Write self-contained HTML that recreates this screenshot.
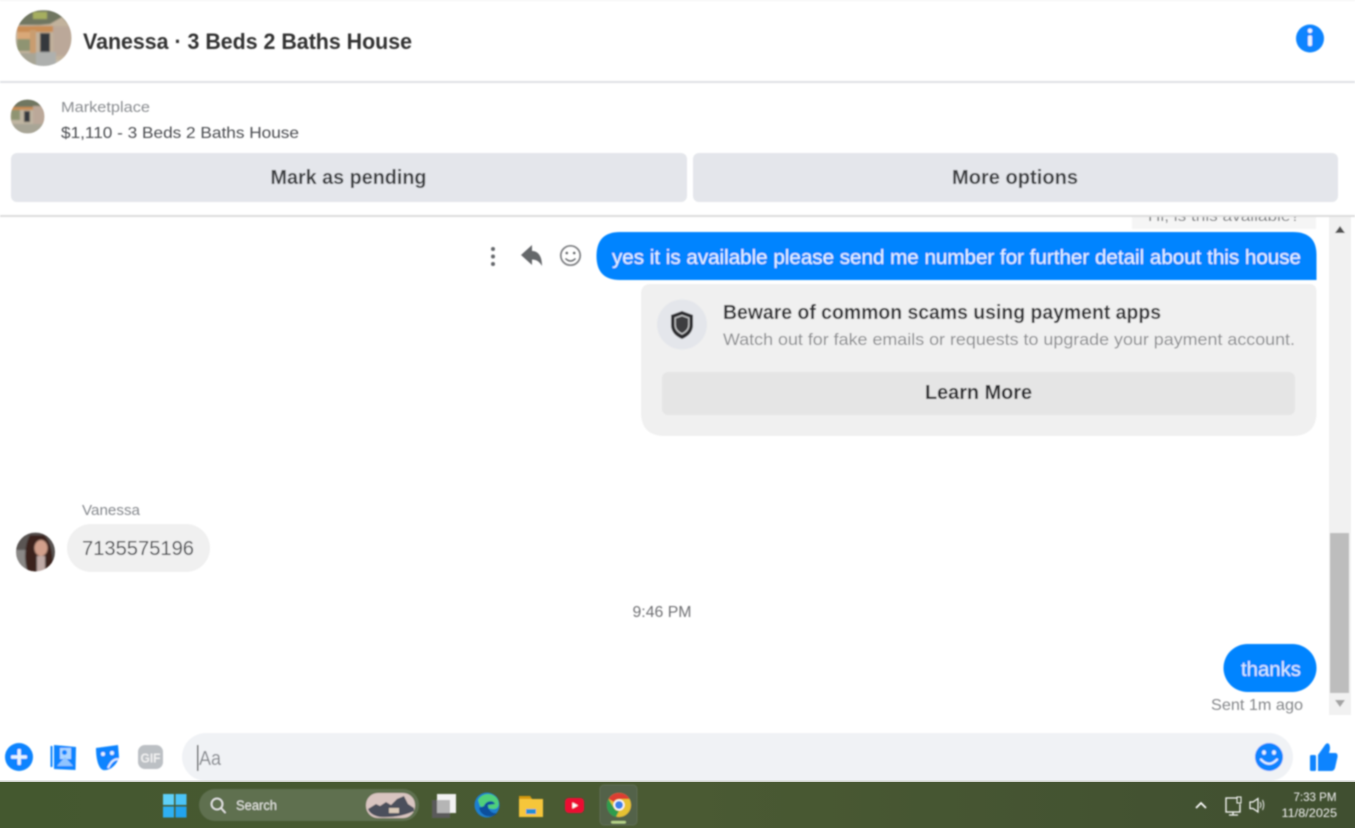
<!DOCTYPE html>
<html><head><meta charset="utf-8"><style>
html,body{margin:0;padding:0;width:1355px;height:828px;overflow:hidden;background:#fff}
svg{display:block}
text{font-family:"Liberation Sans",sans-serif}
</style></head><body>
<svg width="1355" height="828" viewBox="0 0 1355 828" xmlns="http://www.w3.org/2000/svg">
<defs>
<filter id="b" x="-5%" y="-20%" width="110%" height="140%"><feGaussianBlur stdDeviation="0.7"/></filter>
<filter id="b2" x="-20%" y="-20%" width="140%" height="140%"><feGaussianBlur stdDeviation="0.9"/></filter>
<clipPath id="c1"><circle cx="43.500" cy="38" r="28"/></clipPath>
<clipPath id="c2"><circle cx="27.500" cy="116.500" r="17"/></clipPath>
<clipPath id="c3"><circle cx="35.500" cy="552" r="19.500"/></clipPath>
<linearGradient id="tb" x1="0" x2="1" y1="0" y2="0"><stop offset="0" stop-color="#44582f"/><stop offset=".5" stop-color="#4a5a33"/><stop offset="1" stop-color="#404f30"/></linearGradient>
</defs>
<rect width="1355" height="828" fill="#fff"/>
<g filter="url(#b)">
<!-- header -->
<rect y="81" width="1355" height="2" fill="#dfe1e5"/>
<g clip-path="url(#c1)" filter="url(#b2)">
<rect x="15" y="10" width="58" height="56" fill="#c6bdac"/>
<rect x="15" y="10" width="58" height="15" fill="#6f7660"/>
<rect x="33" y="12" width="14" height="7" fill="#a6ae5e"/>
<polygon points="17,27 50,24 62,17 72,28 72,60 17,60" fill="#c2b29c"/>
<rect x="17" y="26" width="38" height="6" fill="#c98d55"/>
<rect x="17" y="32" width="13" height="7" fill="#d9a878"/>
<rect x="17" y="39" width="13" height="12" fill="#8f9472"/>
<rect x="30" y="30" width="6" height="24" fill="#c99d70"/>
<rect x="40" y="33" width="10" height="19" fill="#34383c"/>
<rect x="53" y="26" width="18" height="30" fill="#bba899"/>
<rect x="36" y="52" width="20" height="15" fill="#aeb0ae"/>
<rect x="15" y="53" width="21" height="14" fill="#a8a596"/>
</g>
<text x="83" y="49" font-size="22.500" font-weight="700" fill="#333" textLength="329" lengthAdjust="spacingAndGlyphs">Vanessa · 3 Beds 2 Baths House</text>
<circle cx="1310" cy="38.500" r="14" fill="#0a84ff"/>
<rect x="1308" y="35.500" width="4" height="10.500" rx="1.200" fill="#e9f3ff"/>
<circle cx="1310" cy="30.800" r="2.300" fill="#e9f3ff"/>
<!-- marketplace -->
<g clip-path="url(#c2)" filter="url(#b2)">
<rect x="10" y="99" width="35" height="35" fill="#c0b5a2"/>
<rect x="10" y="99" width="35" height="8" fill="#6f7660"/>
<rect x="11" y="107" width="22" height="3" fill="#c98d55"/>
<rect x="11" y="110" width="9" height="10" fill="#8f9472"/>
<rect x="24" y="111" width="6" height="11" fill="#34383c"/>
<rect x="33" y="106" width="12" height="18" fill="#bba899"/>
<rect x="10" y="124" width="35" height="10" fill="#a8a596"/>
</g>
<text x="61" y="112" font-size="15" fill="#8a8d91" textLength="89" lengthAdjust="spacingAndGlyphs">Marketplace</text>
<text x="61" y="138" font-size="16" fill="#4a4c50" textLength="238" lengthAdjust="spacingAndGlyphs">$1,110 - 3 Beds 2 Baths House</text>
<rect x="11" y="153" width="676" height="49" rx="6" fill="#e4e6eb"/>
<rect x="693" y="153" width="645" height="49" rx="6" fill="#e4e6eb"/>
<text x="270.500" y="184" font-size="20" font-weight="700" fill="#3b3c3f" textLength="156" lengthAdjust="spacingAndGlyphs">Mark as pending</text>
<text x="952" y="184" font-size="20" font-weight="700" fill="#3b3c3f" textLength="126" lengthAdjust="spacingAndGlyphs">More options</text>
<!-- previous message cut-off -->
<rect x="1132" y="217" width="184" height="12" fill="#f5f5f5"/>
<text x="1148" y="221" font-size="16" fill="#77797c" textLength="152" lengthAdjust="spacingAndGlyphs">Hi, is this available?</text>
<rect x="0" y="206" width="1355" height="9" fill="#fff"/>
<rect y="215" width="1355" height="2" fill="#dcdcdc"/>
<rect y="0" width="1355" height="1" fill="#f2f2f2"/>
<!-- scrollbar -->
<rect x="1329" y="217" width="22" height="498" fill="#f1f1f1"/>
<rect x="1330" y="533" width="19" height="160" fill="#bdbdbd"/>
<polygon points="1340,226 1345,233 1335,233" fill="#505050"/>
<polygon points="1335,700 1345,700 1340,707" fill="#a3a3a3"/>
<!-- hover actions -->
<circle cx="493" cy="249" r="2" fill="#65676b"/><circle cx="493" cy="256.500" r="2" fill="#65676b"/><circle cx="493" cy="264" r="2" fill="#65676b"/>
<path d="M521 255 L532 245 V251 C538 251 542 256 542 266 C539 261 536 259.500 532 259.500 V265 Z" fill="#65676b"/>
<circle cx="570.500" cy="255.500" r="9.700" fill="none" stroke="#7b7d80" stroke-width="1.700"/>
<circle cx="566.800" cy="253" r="1.300" fill="#65676b"/><circle cx="574.200" cy="253" r="1.300" fill="#65676b"/>
<path d="M565.500 258.500 Q570.500 263.500 575.500 258.500" fill="none" stroke="#65676b" stroke-width="1.500"/>
<!-- blue bubble -->
<path d="M620 232 H1293 Q1316.500 232 1316.500 255 V280 H620 Q596.500 280 596.500 256 Q596.500 232 620 232 Z" fill="#0084ff"/>
<text x="612" y="264" font-size="20" fill="#e8f3ff" textLength="689" lengthAdjust="spacingAndGlyphs">yes it is available please send me number for further detail about this house</text>
<!-- scam card -->
<path d="M651 284 H1309 Q1316.500 284 1316.500 292 V412 Q1316.500 436 1292 436 H665 Q641 436 641 412 V294 Q641 284 651 284 Z" fill="#f0f0f0"/>
<circle cx="682" cy="324.500" r="25" fill="#e4e6eb"/>
<path d="M682 311 L693 315 V325 C693 332 688 336.500 682 339 C676 336.500 671 332 671 325 V315 Z" fill="#2d2e30"/>
<path d="M682 315.500 L688.800 318 V325 C688.800 329 686 332 682 334 C678 332 675.200 329 675.200 325 V318 Z" fill="#3c3d3f" stroke="#c6c7c9" stroke-width="1.300"/>
<text x="723" y="319" font-size="20" font-weight="700" fill="#323335" textLength="438" lengthAdjust="spacingAndGlyphs">Beware of common scams using payment apps</text>
<text x="723" y="345" font-size="17" fill="#8a8b8e" textLength="572" lengthAdjust="spacingAndGlyphs">Watch out for fake emails or requests to upgrade your payment account.</text>
<rect x="662" y="372" width="633" height="43" rx="6" fill="#e5e5e5"/>
<text x="925" y="399" font-size="20" font-weight="700" fill="#2b2c2e" textLength="107" lengthAdjust="spacingAndGlyphs">Learn More</text>
<!-- Vanessa -->
<text x="82" y="515" font-size="15" fill="#85888d" textLength="58" lengthAdjust="spacingAndGlyphs">Vanessa</text>
<g clip-path="url(#c3)" filter="url(#b2)">
<rect x="15" y="532" width="41" height="41" fill="#5a5552"/>
<rect x="15" y="550" width="14" height="23" fill="#8a8886"/>
<path d="M30 535 C24 546 24 562 28 573 L52 573 C54 560 52 542 44 535 Z" fill="#3a211d"/>
<ellipse cx="41" cy="548" rx="6.500" ry="8" fill="#d2a08c"/>
<rect x="37" y="556" width="8" height="17" fill="#bfaaa6"/>
</g>
<rect x="67" y="524" width="143" height="48" rx="24" fill="#f0f0f0"/>
<text x="82" y="555" font-size="20.500" fill="#4a4c50" textLength="112" lengthAdjust="spacingAndGlyphs">7135575196</text>
<!-- time -->
<text x="632.500" y="617" font-size="15.500" fill="#6f7073" textLength="59" lengthAdjust="spacingAndGlyphs">9:46 PM</text>
<!-- thanks -->
<rect x="1223.500" y="644" width="93" height="48" rx="24" fill="#0084ff"/>
<text x="1241" y="676" font-size="20" fill="#dcecff" textLength="60" lengthAdjust="spacingAndGlyphs">thanks</text>
<text x="1211" y="710" font-size="16" fill="#85878a" textLength="92" lengthAdjust="spacingAndGlyphs">Sent 1m ago</text>
<!-- composer -->
<circle cx="19" cy="757" r="14" fill="#0a84ff"/>
<rect x="17.500" y="749" width="3.400" height="16" rx="1" fill="#e8f3ff"/><rect x="11" y="755.300" width="16" height="3.400" rx="1" fill="#e8f3ff"/>
<path d="M51.500 746 V767" stroke="#0a84ff" stroke-width="2" fill="none"/>
<path d="M54 745 L76 747 L75.500 770 L54 769 Z" fill="#0a84ff"/>
<rect x="60" y="748" width="11" height="11" fill="#e3f0ff" opacity=".75"/>
<circle cx="64.500" cy="752.500" r="2.500" fill="#0a84ff"/>
<path d="M57 766 L65 757 L73 766 Z" fill="#8fc4ff"/>
<path d="M96 748 L118 745 L119 757 C117 765 110 771 103 770 C98 768 96 758 96 748 Z" fill="#0a84ff"/>
<circle cx="103" cy="754" r="2" fill="#e3f0ff"/><circle cx="112" cy="753" r="2" fill="#e3f0ff"/>
<path d="M108 768 Q112 759 118 759" stroke="#e3f0ff" stroke-width="2" fill="none"/>
<rect x="138" y="745" width="25" height="24" rx="7" fill="#bcc0c4"/>
<text x="140.500" y="762.500" font-size="12.500" font-weight="700" fill="#f0f0f0" textLength="20" lengthAdjust="spacingAndGlyphs">GIF</text>
<rect x="182" y="733" width="1111" height="48" rx="24" fill="#f0f2f5"/>
<rect x="197" y="745" width="1.500" height="26" fill="#555"/>
<text x="199" y="765" font-size="20" fill="#85888d" textLength="22" lengthAdjust="spacingAndGlyphs">Aa</text>
<circle cx="1269" cy="757" r="14" fill="#0a84ff"/>
<ellipse cx="1264" cy="752.500" rx="2" ry="2.300" fill="#e3f0ff"/><ellipse cx="1274" cy="752.500" rx="2" ry="2.300" fill="#e3f0ff"/>
<path d="M1261 759.500 Q1269 768 1277 759.500" stroke="#e3f0ff" stroke-width="2.200" fill="none" stroke-linecap="round"/>
<rect x="1310" y="755" width="6" height="16" rx="1.500" fill="#0a84ff"/>
<path d="M1318 755 L1325 745 Q1327 742 1329 744 Q1331 747 1329 753 H1335 Q1338 753 1337.500 757 L1335 768 Q1334 771 1331 771 H1318 Z" fill="#0a84ff"/>
</g>
<!-- taskbar -->
<rect y="780.500" width="1355" height="1.500" fill="#cfd2cc"/>
<rect y="782" width="1355" height="46" fill="url(#tb)"/>
<g filter="url(#b)">
<rect x="163" y="794" width="11" height="11" fill="#5fd0f8"/><rect x="175.500" y="794" width="11" height="11" fill="#4cc4f7"/>
<rect x="163" y="806.500" width="11" height="11" fill="#2fb0f2"/><rect x="175.500" y="806.500" width="11" height="11" fill="#22a3ee"/>
<rect x="199" y="789" width="220" height="32" rx="16" fill="#5f6f4f"/>
<circle cx="217" cy="804" r="5.500" fill="none" stroke="#eee" stroke-width="1.500"/>
<path d="M221 808 L225.500 813" stroke="#eee" stroke-width="1.500"/>
<text x="236" y="810" font-size="13.500" fill="#e6e8e2" textLength="41" lengthAdjust="spacingAndGlyphs">Search</text>
<rect x="366" y="793" width="49" height="25" rx="12" fill="#d8c4c0"/>
<path d="M368 809 L376 804 L380 806 L386 802 L391 805 L397 799 L404 796 L408 804 L414 808 V811 Q400 818 380 817 Q370 815 368 809 Z" fill="#4c4f5c"/>
<rect x="389" y="808" width="10" height="5" fill="#d9c9b8"/>
<rect x="432" y="800" width="18" height="18" fill="#5a5a5a"/>
<rect x="437" y="794" width="19" height="19" fill="#f2f2f2"/>
<rect x="437" y="800" width="13" height="13" fill="#b5b5b5"/>
<circle cx="487" cy="805" r="12.500" fill="#1a7fd0"/>
<path d="M478 800 C482 792 494 792 498 800 C500 805 498 810 492 809 C486 808 483 808 480 806 Z" fill="#4fd07a"/>
<path d="M484 806 C486 800 494 800 495 804 L488 805 C488 810 492 814 497 813 C492 819 481 817 479 808 Z" fill="#0f4f9c"/>
<path d="M519 796 H530 L532 799 H543 V817 H519 Z" fill="#f6c63a"/>
<path d="M519 796 H530 L532 799 H519 Z" fill="#d59a10"/>
<rect x="526" y="809" width="10" height="5" fill="#1d8fd8"/>
<rect x="565" y="798" width="19" height="15" rx="4" fill="#ec0f30"/>
<polygon points="572.500,802.500 578,805.500 572.500,808.500" fill="#fff"/>
<rect x="600" y="785" width="37" height="40" rx="4" fill="#52624a" stroke="#5e6d52" stroke-width="1"/>
<circle cx="619" cy="805" r="12" fill="#e7c133"/>
<path d="M619 793 A12 12 0 0 1 629.400 799 H619 A6 6 0 0 0 613.800 802 L608.600 799 A12 12 0 0 1 619 793 Z" fill="#dc3e32"/>
<path d="M608.600 799 L614 808 A6 6 0 0 0 619 811 L616 817 A12 12 0 0 1 608.600 799 Z" fill="#2f9c4d"/>
<circle cx="619" cy="805" r="5.500" fill="#fff"/><circle cx="619" cy="805" r="4" fill="#3b80e8"/>
<rect x="611" y="821" width="15" height="2.500" rx="1.200" fill="#b6d48a"/>
<!-- tray -->
<path d="M1196 808 L1201 803 L1206 808" fill="none" stroke="#fff" stroke-width="1.700"/>
<path d="M1237 798 H1226 V812 H1240 V804" fill="none" stroke="#fff" stroke-width="1.300"/>
<rect x="1237" y="797" width="4" height="6" fill="none" stroke="#fff" stroke-width="1"/>
<path d="M1229 815 H1238 M1233 812 V815" stroke="#fff" stroke-width="1.200"/>
<path d="M1250 802 H1253 L1258 798.500 V812 L1253 808.500 H1250 Z" fill="none" stroke="#fff" stroke-width="1.200"/>
<path d="M1260 802 Q1262 805 1260 808 M1262.500 800 Q1265 805 1262.500 810" fill="none" stroke="#eee" stroke-width="1"/>
<text x="1293.500" y="801" font-size="12" fill="#f2f2f2" textLength="43" lengthAdjust="spacingAndGlyphs">7:33 PM</text>
<text x="1281.500" y="817" font-size="12" fill="#f2f2f2" textLength="55.500" lengthAdjust="spacingAndGlyphs">11/8/2025</text>
</g>
</svg>
</body></html>
